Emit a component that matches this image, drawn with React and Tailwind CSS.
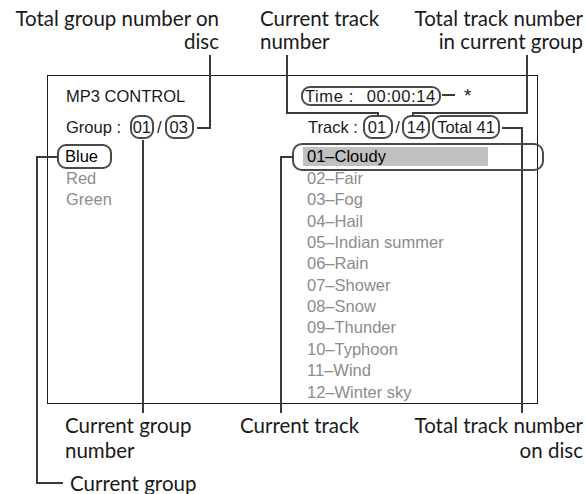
import React from "react";

const labelFont = { fontFamily: 'Lato, "Open Sans", sans-serif' };

const groups = ["Blue", "Red", "Green"];
const tracks = [
  "01–Cloudy",
  "02–Fair",
  "03–Fog",
  "04–Hail",
  "05–Indian summer",
  "06–Rain",
  "07–Shower",
  "08–Snow",
  "09–Thunder",
  "10–Typhoon",
  "11–Wind",
  "12–Winter sky",
];

function Pill({ children, className = "" }) {
  return (
    <span
      className={
        "inline-flex items-center rounded-[9px] border-2 border-[#4a4a4a] " +
        className
      }
    >
      {children}
    </span>
  );
}

export default function App() {
  return (
    <div className="relative w-[585px] h-[494px] bg-white pt-[75px] pl-[47px] text-[#1a1a1a] overflow-hidden">
      {/* Screen */}
      <div className="w-[491px] h-[329px] border border-[#1a1a1a] pt-[8px] pl-[18px] text-[16.5px] font-['Liberation_Sans',Arial,sans-serif]">
        <div className="grid grid-cols-[235px_1fr]">
          {/* row 1 */}
          <div className="h-[24px] flex items-center">MP3 CONTROL</div>
          <div className="h-[24px] flex items-center">
            <Pill className="h-[20px] pl-[2px] pr-[3px] tracking-[0.6px]">
              <span>Time :</span>
              <span className="ml-[13px]">00:00:14</span>
            </Pill>
          </div>

          {/* row 2 */}
          <div className="h-[24px] mt-[7px] flex items-center whitespace-pre">
            <span>Group : </span>
            <Pill className="h-[24px] ml-[4px] px-[1px]">01</Pill>
            <span className="mx-[3px]">/</span>
            <Pill className="h-[24px] pl-[3px] pr-[4px]">03</Pill>
          </div>
          <div className="h-[24px] mt-[7px] flex items-center whitespace-pre pl-[7px]">
            <span>Track :</span>
            <Pill className="h-[24px] ml-[5px] pl-[3px] pr-[5px]">01</Pill>
            <span className="mx-[2px]">/</span>
            <Pill className="h-[24px] px-[3px]">14</Pill>
            <Pill className="h-[24px] ml-[2px] px-[3px]">Total 41</Pill>
          </div>

          {/* lists */}
          <div className="mt-[7px]">
            {groups.map((g, i) => (
              <div key={g} className="h-[21.4px] flex items-center">
                {i === 0 ? (
                  <Pill className="h-[25px] -ml-[9px] pl-[6px] pr-[12px] text-black">
                    {g}
                  </Pill>
                ) : (
                  <span className="text-[#8c8c8c]">{g}</span>
                )}
              </div>
            ))}
          </div>
          <div className="mt-[7px]">
            {tracks.map((t, i) => (
              <div key={t} className="h-[21.4px] flex items-center">
                {i === 0 ? (
                  <span className="ml-[2px] w-[185px] h-[19px] flex items-center pl-[4px] bg-[#c0c0c0] text-black">
                    {t}
                  </span>
                ) : (
                  <span className="pl-[6px] text-[#8c8c8c]">{t}</span>
                )}
              </div>
            ))}
          </div>
        </div>
      </div>

      {/* Callout lines */}
      <svg
        className="absolute left-0 top-0 pointer-events-none"
        width="585"
        height="494"
        viewBox="0 0 585 494"
        fill="none"
        stroke="#3a3a3a"
        strokeWidth="2"
      >
        <path d="M210 55 V128 H197" />
        <path d="M287 55 V113 H378 V115" />
        <path d="M527 55 V113 H413 V115" />
        <path d="M442 95 H455" />
        <path d="M502 128 H522 V413" />
        <rect x="293" y="144" width="250" height="26" rx="9" stroke="#4a4a4a" />
        <path d="M293 157 H281 V413" />
        <path d="M143 140 V413" />
        <path d="M57 157 H37 V483 H63" />
      </svg>

      <span className="absolute left-[464px] top-[86px] text-[19px] leading-[20px] font-['Liberation_Sans',Arial,sans-serif]">
        *
      </span>

      {/* Labels */}
      <div
        className="absolute left-0 top-[7px] w-[219px] text-right text-[20.5px] leading-[23px]"
        style={labelFont}
      >
        Total group number on
        <br />
        disc
      </div>
      <div
        className="absolute left-[260px] top-[7px] text-[20.5px] leading-[23px]"
        style={labelFont}
      >
        Current track
        <br />
        number
      </div>
      <div
        className="absolute right-[2px] top-[7px] text-right text-[20.5px] leading-[23px]"
        style={labelFont}
      >
        Total track number
        <br />
        in current group
      </div>
      <div
        className="absolute left-[65px] top-[413px] text-[20.5px] leading-[25px]"
        style={labelFont}
      >
        Current group
        <br />
        number
      </div>
      <div
        className="absolute left-[240px] top-[413px] text-[20.5px] leading-[25px]"
        style={labelFont}
      >
        Current track
      </div>
      <div
        className="absolute right-[2px] top-[413px] text-right text-[20.5px] leading-[25px]"
        style={labelFont}
      >
        Total track number
        <br />
        on disc
      </div>
      <div
        className="absolute left-[70px] top-[471px] text-[20.5px] leading-[25px]"
        style={labelFont}
      >
        Current group
      </div>
    </div>
  );
}
